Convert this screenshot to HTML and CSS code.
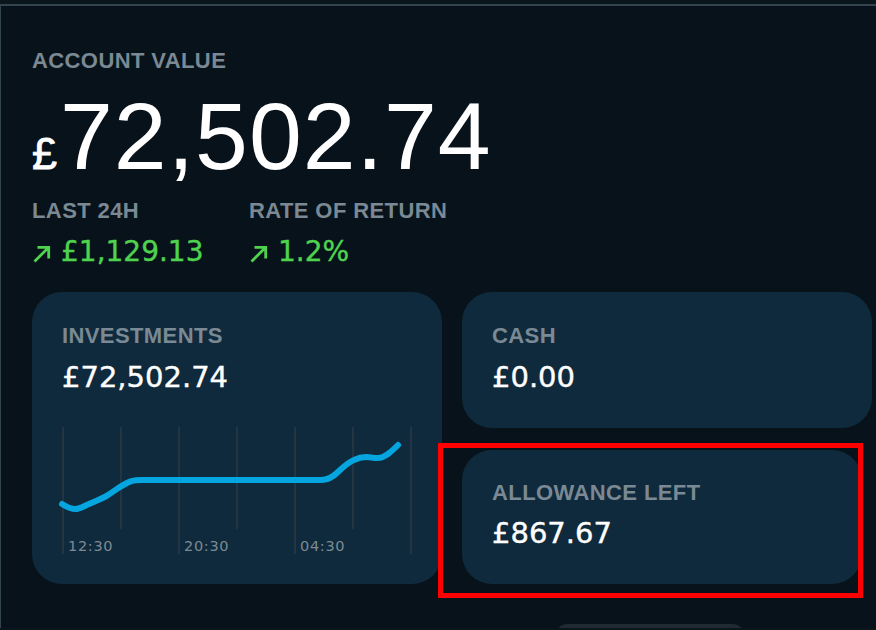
FILE: index.html
```html
<!DOCTYPE html>
<html lang="en">
<head>
<meta charset="utf-8">
<title>Account value</title>
<link rel="stylesheet" href="styles.css">
</head>
<body>
  <main class="panel">
    <div class="label">ACCOUNT VALUE</div>
    <div class="big"><span class="cur">£</span>72,502.74</div>

    <div class="stats">
      <div class="stat stat-first">
        <div class="label">LAST 24H</div>
        <div class="gain">
          <svg class="arrow" viewBox="0 0 18 18" width="18" height="18" aria-hidden="true"><path d="M1.5 16.5 L15.5 2.5 M4.5 2.3 H15.7 V13.5" /></svg>
          <span>£1,129.13</span>
        </div>
      </div>
      <div class="stat">
        <div class="label">RATE OF RETURN</div>
        <div class="gain">
          <svg class="arrow" viewBox="0 0 18 18" width="18" height="18" aria-hidden="true"><path d="M1.5 16.5 L15.5 2.5 M4.5 2.3 H15.7 V13.5" /></svg>
          <span>1.2%</span>
        </div>
      </div>
    </div>

    <div class="cards">
      <section class="card card-inv">
        <div class="label">INVESTMENTS</div>
        <div class="value">£72,502.74</div>
        <svg class="chart" viewBox="0 0 352 130" width="352" height="130">
          <g class="grid">
            <line x1="1" y1="0" x2="1" y2="127" />
            <line x1="59" y1="0" x2="59" y2="102" />
            <line x1="117" y1="0" x2="117" y2="127" />
            <line x1="175" y1="0" x2="175" y2="102" />
            <line x1="233" y1="0" x2="233" y2="127" />
            <line x1="291" y1="0" x2="291" y2="102" />
            <line x1="349" y1="0" x2="349" y2="127" />
          </g>
          <path class="line" d="M0,77 C5,80 9,82 13,82 C18,82 22,79 27,77 C33,74 40,72 46,68 C54,63 62,56 70,54 C73,53 76,53 80,53 L258,53 C263,53 267,52 271,49 C278,44 284,36 292,33 C296,31 300,30 304,30 C308,30 311,31 316,31 C320,31 323,29 326,27 C330,24 333,21 336,18" />
          <text class="tick" x="6" y="124">12:30</text>
          <text class="tick" x="122" y="124">20:30</text>
          <text class="tick" x="238" y="124">04:30</text>
        </svg>
      </section>
      <div class="col">
        <section class="card card-cash">
          <div class="label">CASH</div>
          <div class="value">£0.00</div>
        </section>
        <section class="card card-allow">
          <div class="label">ALLOWANCE LEFT</div>
          <div class="value">£867.67</div>
        </section>
      </div>
    </div>

    <div class="footer"><div class="pill"></div></div>
  </main>
  <div class="annot"></div>
</body>
</html>
```
FILE: styles.css
```css
html, body {
  margin: 0;
  padding: 0;
}
body {
  background: #0a151c;
  width: 876px;
  height: 630px;
  overflow: hidden;
  position: relative;
  font-family: "Liberation Sans", Arial, sans-serif;
}
.panel {
  margin-top: 4px;
  border-top: 2px solid #34444f;
  border-left: 1px solid #34444f;
  background: #08121a;
  height: 624px;
  overflow: hidden;
  box-sizing: border-box;
  padding: 42px 0 0 31px;
}
.label {
  font-family: "Liberation Sans", Arial, sans-serif;
  font-weight: 700;
  font-size: 22px;
  line-height: 26px;
  letter-spacing: 0.4px;
  color: #7a8993;
  white-space: nowrap;
}
.big {
  margin-top: 15px;
  font-family: "Liberation Sans", Arial, sans-serif;
  font-size: 95px;
  line-height: 95px;
  letter-spacing: 1px;
  color: #ffffff;
  white-space: nowrap;
}
.cur {
  font-size: 45px;
  line-height: 1;
  letter-spacing: 0;
  margin-right: 3px;
  -webkit-text-stroke: 0.8px #ffffff;
}
.stats {
  display: flex;
  margin-top: 14px;
}
.stat-first {
  width: 217px;
}
.gain {
  margin-top: 11px;
  display: flex;
  align-items: center;
  gap: 10px;
  font-family: "DejaVu Sans", sans-serif;
  font-size: 28px;
  line-height: 34px;
  color: #4fd34f;
  -webkit-text-stroke: 0.4px #4fd34f;
  white-space: nowrap;
}
.arrow {
  fill: none;
  stroke: #4fd34f;
  stroke-width: 2.8;
  margin-left: 1px;
  margin-top: 4px;
}
.cards {
  margin-top: 23px;
  display: grid;
  grid-template-columns: 410px 410px;
  column-gap: 20px;
}
.col {
  display: flex;
  flex-direction: column;
  gap: 22px;
}
.card {
  background: #0f2a3c;
  border-radius: 30px;
  box-sizing: border-box;
  padding: 31px 30px 0 30px;
}
.card-inv {
  height: 292px;
}
.card-cash {
  height: 136px;
}
.card-allow {
  height: 134px;
  width: 400px;
  padding-top: 30px;
}
.value {
  margin-top: 11px;
  font-family: "DejaVu Sans", sans-serif;
  font-size: 29px;
  line-height: 34px;
  color: #ffffff;
  -webkit-text-stroke: 0.4px #ffffff;
  white-space: nowrap;
}
.card-allow .value {
  margin-top: 10px;
}
.chart {
  display: block;
  margin-top: 33px;
  overflow: visible;
}
.grid line {
  stroke: #2b3a44;
  stroke-width: 1.5;
}
.line {
  fill: none;
  stroke: #05a6e0;
  stroke-width: 6;
  stroke-linecap: round;
  stroke-linejoin: round;
}
.tick {
  font-family: "DejaVu Sans", sans-serif;
  font-size: 14.5px;
  letter-spacing: 0.7px;
  fill: #7d8a93;
}
.footer {
  margin-top: 40px;
  padding-left: 522px;
}
.pill {
  width: 192px;
  height: 44px;
  border-radius: 14px;
  background: #1f2a32;
}
.annot {
  position: absolute;
  left: 438px;
  top: 443px;
  width: 425px;
  height: 155px;
  box-sizing: border-box;
  border: 5px solid #ff0000;
}
```
